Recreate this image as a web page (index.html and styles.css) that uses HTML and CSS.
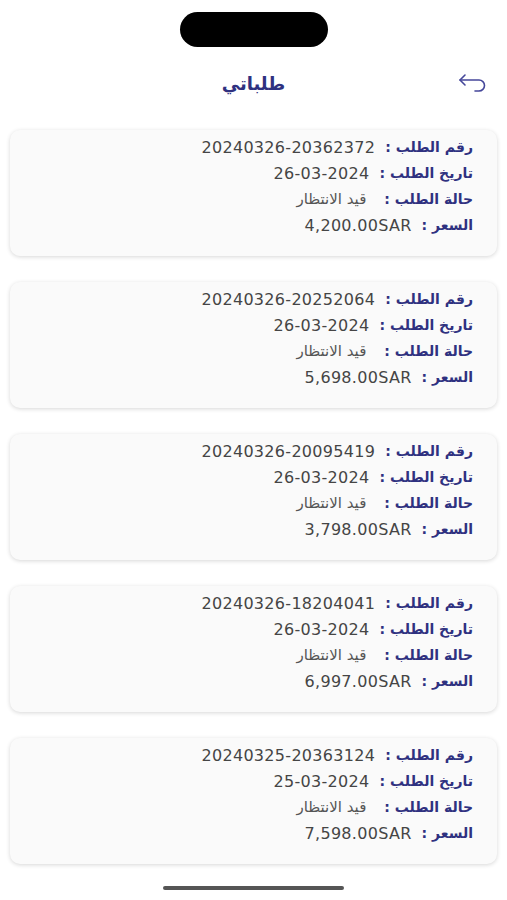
FILE: index.html
```
<!DOCTYPE html>
<html lang="ar">
<head>
<meta charset="utf-8">
<title>طلباتي</title>
<link rel="stylesheet" href="styles.css">
</head>
<body>
<div class="notch"></div>

<div class="topbar">
	<h1 class="title">طلباتي</h1>
	<svg class="back" width="32" height="24" viewBox="0 0 32 24" fill="none" stroke="#45479a" stroke-width="1.6" stroke-linecap="round" stroke-linejoin="round">
		<path d="M8 3 L3 8 L8 13"/>
		<path d="M3 8 H22 a5.5 5.5 0 0 1 0 11 H18"/>
	</svg>
</div>

<div class="orders" dir="rtl">
	<div class="card">
		<div class="row"><span class="label">رقم الطلب :</span><span class="value">20240326-20362372</span></div>
		<div class="row"><span class="label">تاريخ الطلب :</span><span class="value">26-03-2024</span></div>
		<div class="row"><span class="label">حالة الطلب :</span><span class="value status">قيد الانتظار</span></div>
		<div class="row"><span class="label">السعر :</span><span class="value">4,200.00SAR</span></div>
	</div>
	<div class="card">
		<div class="row"><span class="label">رقم الطلب :</span><span class="value">20240326-20252064</span></div>
		<div class="row"><span class="label">تاريخ الطلب :</span><span class="value">26-03-2024</span></div>
		<div class="row"><span class="label">حالة الطلب :</span><span class="value status">قيد الانتظار</span></div>
		<div class="row"><span class="label">السعر :</span><span class="value">5,698.00SAR</span></div>
	</div>
	<div class="card">
		<div class="row"><span class="label">رقم الطلب :</span><span class="value">20240326-20095419</span></div>
		<div class="row"><span class="label">تاريخ الطلب :</span><span class="value">26-03-2024</span></div>
		<div class="row"><span class="label">حالة الطلب :</span><span class="value status">قيد الانتظار</span></div>
		<div class="row"><span class="label">السعر :</span><span class="value">3,798.00SAR</span></div>
	</div>
	<div class="card">
		<div class="row"><span class="label">رقم الطلب :</span><span class="value">20240326-18204041</span></div>
		<div class="row"><span class="label">تاريخ الطلب :</span><span class="value">26-03-2024</span></div>
		<div class="row"><span class="label">حالة الطلب :</span><span class="value status">قيد الانتظار</span></div>
		<div class="row"><span class="label">السعر :</span><span class="value">6,997.00SAR</span></div>
	</div>
	<div class="card">
		<div class="row"><span class="label">رقم الطلب :</span><span class="value">20240325-20363124</span></div>
		<div class="row"><span class="label">تاريخ الطلب :</span><span class="value">25-03-2024</span></div>
		<div class="row"><span class="label">حالة الطلب :</span><span class="value status">قيد الانتظار</span></div>
		<div class="row"><span class="label">السعر :</span><span class="value">7,598.00SAR</span></div>
	</div>
</div>

<div class="home-bar"></div>
</body>
</html>
```

FILE: styles.css
```
body { margin: 0; background: #fff; font-family: "DejaVu Sans", sans-serif; color: #444; }
.notch { width: 148px; height: 35px; margin: 12px auto 0; background: #000; border-radius: 18px; }
.topbar { position: relative; height: 83px; display: flex; align-items: center; justify-content: center; }
.title { margin: 0 0 10px; font-size: 18px; font-weight: bold; color: #2f3180; }
.back { position: absolute; right: 18px; top: 25px; }
.orders { display: flex; flex-direction: column; gap: 26px; padding: 0 10px; }
.card { background: #fafafa; border-radius: 10px; box-shadow: 0 1px 4px rgba(0,0,0,0.16); padding: 4px 24px 18px; height: 104px; }
.row { display: flex; align-items: center; gap: 10px; height: 26px; }
.label { font-size: 14px; font-weight: bold; color: #2f3180; }
.value { font-size: 16px; letter-spacing: 0.3px; color: #454545; }
.status { font-size: 15px; letter-spacing: 0; color: #555; margin-right: 8px; }
.home-bar { width: 181px; height: 4px; margin: 22px auto 0; background: #555; border-radius: 2px; }
```
